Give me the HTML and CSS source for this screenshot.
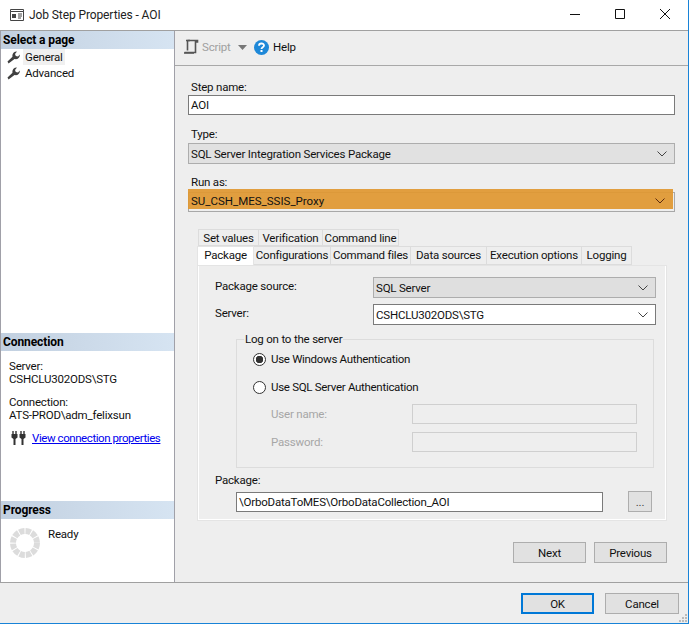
FILE: index.html
```html
<!DOCTYPE html>
<html lang="en">
<head>
<meta charset="utf-8">
<title>Job Step Properties - AOI</title>
<link rel="stylesheet" href="styles.css">
</head>
<body>
<div class="window">
  <header class="titlebar">
    <svg class="app-icon" width="16" height="14" viewBox="0 0 16 14"><path d="M1.500 3.500h13v9h-13z M1.500 1.500h13v2h-13z" fill="none" stroke="#444"/><path d="M3 6h4v4H3z" fill="#444"/><path d="M9 6h4M9 8h4M9 10h3" stroke="#444"/></svg>
    <span class="title">Job Step Properties - AOI</span>
    <div class="winbtns">
      <svg width="12" height="12" viewBox="0 0 12 12"><path d="M1 6.500h10" stroke="#111"/></svg>
      <svg width="12" height="12" viewBox="0 0 12 12"><path d="M1.500 1.500h9v9h-9z" fill="none" stroke="#111"/></svg>
      <svg width="12" height="12" viewBox="0 0 12 12"><path d="M1 1l10 10M11 1L1 11" stroke="#111"/></svg>
    </div>
  </header>
  <div class="main">
    <aside class="side">
      <section class="sec-pages">
        <h2 class="sec-head">Select a page</h2>
        <ul class="pages">
          <li class="page">
            <svg class="wrench" width="13" height="13" viewBox="0 0 13 13"><path d="M1.500 12.500L0.500 10.500 5.500 5.800C4.800 3.500 6.500 .5 10 .6L8 3l.8 2 2.200.6L12.800 3.600C13.200 6.500 10.500 8.800 7.500 8z" fill="#404040"/></svg>
            <span class="page-sel">General</span>
          </li>
          <li class="page">
            <svg class="wrench" width="13" height="13" viewBox="0 0 13 13"><path d="M1.500 12.500L0.500 10.500 5.500 5.800C4.800 3.500 6.500 .5 10 .6L8 3l.8 2 2.200.6L12.800 3.600C13.200 6.500 10.500 8.800 7.500 8z" fill="#404040"/></svg>
            <span class="page-txt">Advanced</span>
          </li>
        </ul>
      </section>
      <section class="sec-conn">
        <h2 class="sec-head">Connection</h2>
        <div class="conn-body">
          <div class="conn-line">Server:</div>
          <div class="conn-line">CSHCLU302ODS\STG</div>
          <div class="conn-line conn-gap">Connection:</div>
          <div class="conn-line">ATS-PROD\adm_felixsun</div>
          <div class="conn-link">
            <svg class="plug" width="15" height="14" viewBox="0 0 15 14"><path d="M2 0v3M5 0v3M10 0v3M13 0v3" stroke="#333" stroke-width="1.400"/><path d="M0.500 3h6v3.500L4.500 8v6h-2V8L.5 6.500zM8.500 3h6v3.500L12.500 8v6h-2V8L8.500 6.500z" fill="#333"/></svg>
            <a class="link" href="#">View connection properties</a>
          </div>
        </div>
      </section>
      <section class="sec-prog">
        <h2 class="sec-head">Progress</h2>
        <div class="prog-body">
          <svg class="spinner" width="32" height="32" viewBox="0 0 32 32"><circle cx="16" cy="16" r="12" fill="none" stroke="#dcdcdc" stroke-width="6" stroke-dasharray="5.300 1"/></svg>
          <span class="ready">Ready</span>
        </div>
      </section>
    </aside>
    <main class="content">
      <div class="toolbar">
        <svg class="script-icon" width="17" height="16" viewBox="0 0 17 16"><path d="M4.500 1.500h10v1.500h-2v10.500H1.500M4.500 1.500v10" fill="none" stroke="#555" stroke-width="1.600"/><path d="M3 1.500h4M1 14h10" stroke="#555" stroke-width="1.600"/></svg>
        <span class="tool-dim">Script</span>
        <svg class="caret" width="9" height="5" viewBox="0 0 9 5"><path d="M0 0h9L4.500 5z" fill="#777"/></svg>
        <svg class="help-icon" width="15" height="15" viewBox="0 0 15 15"><circle cx="7.500" cy="7.500" r="7.500" fill="#1e88d8"/><path d="M5 5.700C5 2.800 10 2.800 10 5.500 10 7.300 7.500 7.200 7.500 9" fill="none" stroke="#fff" stroke-width="1.800"/><rect x="6.500" y="10" width="2" height="2" fill="#fff"/></svg>
        <span class="tool">Help</span>
      </div>
      <div class="form">
        <label class="lbl">Step name:</label>
        <div class="input input-step">AOI</div>
        <label class="lbl lbl-type">Type:</label>
        <div class="select select-type"><span>SQL Server Integration Services Package</span><svg class="chev" width="10" height="6" viewBox="0 0 10 6"><path d="M.5.500L5 5 9.500.5" fill="none" stroke="#444"/></svg></div>
        <label class="lbl lbl-run">Run as:</label>
        <div class="select select-run"><span class="run-txt">SU_CSH_MES_SSIS_Proxy</span><svg class="chev run-chev" width="10" height="6" viewBox="0 0 10 6"><path d="M.5.500L5 5 9.500.5" fill="none" stroke="#5a2a10"/></svg></div>
        <div class="tabs">
          <div class="tabrow tabrow-back">
            <span class="tab tab-a">Set values</span><span class="tab tab-b">Verification</span><span class="tab tab-c">Command line</span>
          </div>
          <div class="tabrow">
            <span class="tab tab-active">Package</span><span class="tab tab-d">Configurations</span><span class="tab tab-e">Command files</span><span class="tab tab-f">Data sources</span><span class="tab tab-g">Execution options</span><span class="tab tab-h">Logging</span>
          </div>
        </div>
        <div class="panel">
          <div class="prow prow-src">
            <span class="plabel">Package source:</span>
            <div class="select select-src"><span>SQL Server</span><svg class="chev" width="10" height="6" viewBox="0 0 10 6"><path d="M.5.500L5 5 9.500.5" fill="none" stroke="#444"/></svg></div>
          </div>
          <div class="prow prow-srv">
            <span class="plabel">Server:</span>
            <div class="select select-srv"><span>CSHCLU302ODS\STG</span><svg class="chev" width="10" height="6" viewBox="0 0 10 6"><path d="M.5.500L5 5 9.500.5" fill="none" stroke="#444"/></svg></div>
          </div>
          <fieldset class="group">
            <legend class="legend">Log on to the server</legend>
            <div class="radio-row"><span class="radio radio-on"></span><span>Use Windows Authentication</span></div>
            <div class="radio-row radio-row2"><span class="radio"></span><span>Use SQL Server Authentication</span></div>
            <div class="cred cred-user"><span class="cred-lbl">User name:</span><div class="cred-input"></div></div>
            <div class="cred cred-pass"><span class="cred-lbl">Password:</span><div class="cred-input"></div></div>
          </fieldset>
          <div class="pkg-lbl">Package:</div>
          <div class="pkg-row">
            <div class="input input-pkg">\OrboDataToMES\OrboDataCollection_AOI</div>
            <button class="btn btn-dots">...</button>
          </div>
        </div>
        <div class="nav-row">
          <button class="btn btn-nav">Next</button>
          <button class="btn btn-nav">Previous</button>
        </div>
      </div>
    </main>
  </div>
  <footer class="footer">
    <button class="btn btn-ok">OK</button>
    <button class="btn btn-cancel">Cancel</button>
    <svg class="grip" width="10" height="10" viewBox="0 0 10 10"><path d="M7 1h2v2H7zM4 4h2v2H4zM7 4h2v2H7zM1 7h2v2H1zM4 7h2v2H4zM7 7h2v2H7z" fill="#bbb"/></svg>
  </footer>
</div>
</body>
</html>
```
FILE: styles.css
```css
* { box-sizing: border-box; }
html, body { margin: 0; padding: 0; }
body {
  width: 689px; height: 624px; overflow: hidden;
  font-family: Roboto, "Open Sans", "Liberation Sans", sans-serif;
  font-size: 11.5px; letter-spacing: -.2px; line-height: 16px; color: #111; background: #eee;
}
.window {
  width: 689px; height: 624px; display: flex; flex-direction: column;
  background: #eee; border-right: 1px solid #1883d7; border-bottom: 1px solid #1883d7;
  position: relative;
}
.titlebar {
  height: 31px; flex: none; display: flex; align-items: center;
  background: #fff; border-bottom: 1px solid #a0a0a0; padding-left: 9px;
}
.app-icon { margin-right: 4px; }
.title { font-size: 12px; color: #222; letter-spacing: -.1px; }
.winbtns { margin-left: auto; margin-right: 17px; display: flex; gap: 33px; margin-top: -2px; }
.main { flex: none; height: 552px; display: flex; border-bottom: 1px solid #a0a0a0; }
.side {
  width: 175px; flex: none; background: #fff; display: flex; flex-direction: column;
  border-left: 1px solid #a0a0a8; border-right: 1px solid #a0a0a8;
}
.sec-pages { height: 302px; flex: none; }
.sec-conn { height: 168px; flex: none; }
.sec-prog { flex: 1; }
.sec-head {
  margin: 0; height: 18px; font-size: 12px; line-height: 18px; font-weight: 700; padding-left: 2px;
  background: linear-gradient(90deg, #c2d0e0, #d6e4f2); color: #000; letter-spacing: -.1px;
}
.pages { list-style: none; margin: 0; padding: 0; }
.page { height: 16px; display: flex; align-items: center; padding-left: 6px; }
.wrench { margin-right: 3px; flex: none; }
.page-sel { background: #f0f0f0; padding: 0 2px; }
.page-txt { padding: 0 2px; }
.conn-body { padding: 9px 0 0 8px; }
.conn-line { height: 12.500px; line-height: 13px; white-space: nowrap; }
.conn-gap { margin-top: 11px; }
.conn-link { display: flex; align-items: center; margin-top: 9px; padding-left: 2px; }
.plug { flex: none; }
.link { color: #0000ee; margin-left: 6px; text-decoration: underline; white-space: nowrap; letter-spacing: -.43px; }
.prog-body { display: flex; align-items: flex-start; padding: 8px 0 0 8px; }
.spinner { flex: none; margin-right: 7px; }
.ready { margin-top: -1px; }
.content { flex: 1; min-width: 0; }
.toolbar {
  height: 35px; display: flex; align-items: center; padding: 0 0 2px 8px;
  border-bottom: 1px solid #a8a8a8;
}
.script-icon { margin-right: 2px; }
.tool-dim { color: #a0a0a0; width: 36px; }
.caret { margin-right: 7px; }
.help-icon { margin-right: 4px; }
.form { padding: 13px 0 0 13px; }
.lbl { display: block; height: 16px; padding-left: 3px; }
.input {
  background: #fff; border: 1px solid #7a7a7a; height: 20px; line-height: 18px; padding-left: 2px;
}
.input-step { width: 487px; }
.select {
  display: flex; align-items: center; justify-content: space-between; height: 21px;
  background: #e1e1e1; border: 1px solid #adadad; padding: 0 7px 0 2px;
}
.lbl-type { margin-top: 11px; height: 17px; }
.select-type { width: 487px; }
.lbl-run { margin-top: 10px; }
.select-run { width: 487px; background: #eee; border-color: #a8a8a8; margin-top: 2px; height: 20px; position: relative; }
.select-run::before {
  content: ""; position: absolute; left: -1px; top: -4px; right: 1px; bottom: 2px;
  background: rgba(224, 152, 50, .93);
}
.run-txt { position: relative; margin-top: -2px; letter-spacing: 0; }
.run-chev { position: relative; margin-top: -2px; margin-right: 2px; }
.tabs { margin: 17px 0 0 9px; }
.tabrow { display: flex; height: 19px; padding-left: 1px; }
.tabrow-back { height: 17px; }
.tab {
  display: block; height: 100%; line-height: 17px; background: #eee; text-align: center; white-space: nowrap;
  border: 1px solid #dcdcdc; border-left: 0;
}
.tab-a { width: 61px; border-left: 1px solid #dcdcdc; }
.tab-b { width: 64px; }
.tab-c { width: 76px; }
.tab-active {
  width: 57px; background: #fff; border: 1px solid #e4e4e4; border-bottom: 0; margin-left: -1px; height: 20px;
}
.tab-d { width: 77px; }
.tab-e { width: 80px; }
.tab-f { width: 76px; }
.tab-g { width: 95px; }
.tab-h { width: 50px; }
.panel {
  width: 470px; height: 256px; margin-left: 9px; background: #eee;
  border: 2px solid #fff; border-top-width: 1px; outline: 1px solid #e4e4e4; outline-offset: -1px;
}
.prow { display: flex; align-items: center; }
.prow-src { margin-top: 11px; }
.prow-srv { margin-top: 6px; }
.plabel { width: 174px; padding-left: 16px; flex: none; margin-bottom: 3px; }
.select-src { width: 283px; background: #dfdfdf; }
.select-srv { width: 283px; background: #fff; border-color: #7a7a7a; }
.group {
  margin: 7px 0 0 37px; padding: 0; width: 418px; height: 136px; border: 1px solid #dcdcdc; min-inline-size: 0;
}
.legend { margin-left: 7px; padding: 0 1px; line-height: 15px; }
.radio-row { display: flex; align-items: center; height: 16px; margin: 4px 0 0 16px; letter-spacing: -.3px; }
.radio-row2 { margin-top: 12px; }
.radio {
  width: 13px; height: 13px; border-radius: 50%; border: 1px solid #333; background: #fff; margin-right: 5px; flex: none;
}
.radio-on { background: radial-gradient(circle, #333 0 3.500px, #fff 4px); }
.cred { display: flex; align-items: center; height: 20px; }
.cred-user { margin-top: 9px; }
.cred-pass { margin-top: 8px; }
.cred-lbl { width: 175px; padding-left: 34px; color: #a6a6a6; flex: none; }
.cred-input { width: 225px; height: 20px; border: 1px solid #cfcfcf; background: #eee; }
.pkg-lbl { padding-left: 16px; margin-top: 4px; height: 16px; }
.pkg-row { display: flex; align-items: center; margin: 3px 0 0 37px; }
.input-pkg { width: 367px; }
.btn {
  font: inherit; letter-spacing: inherit; color: #111; background: #e1e1e1; border: 1px solid #adadad; padding: 0; height: 21px;
}
.btn-dots { width: 24px; margin-left: 25px; color: #444; }
.nav-row { display: flex; gap: 8px; margin: 21px 0 0 325px; }
.btn-nav { width: 73px; }
.footer { flex: 1; display: flex; align-items: flex-start; padding: 10px 0 0 521px; position: relative; }
.btn-ok { width: 73px; border: 2px solid #0078d7; }
.btn-cancel { width: 74px; margin-left: 11px; }
.grip { position: absolute; right: 0; bottom: 0; }
```
